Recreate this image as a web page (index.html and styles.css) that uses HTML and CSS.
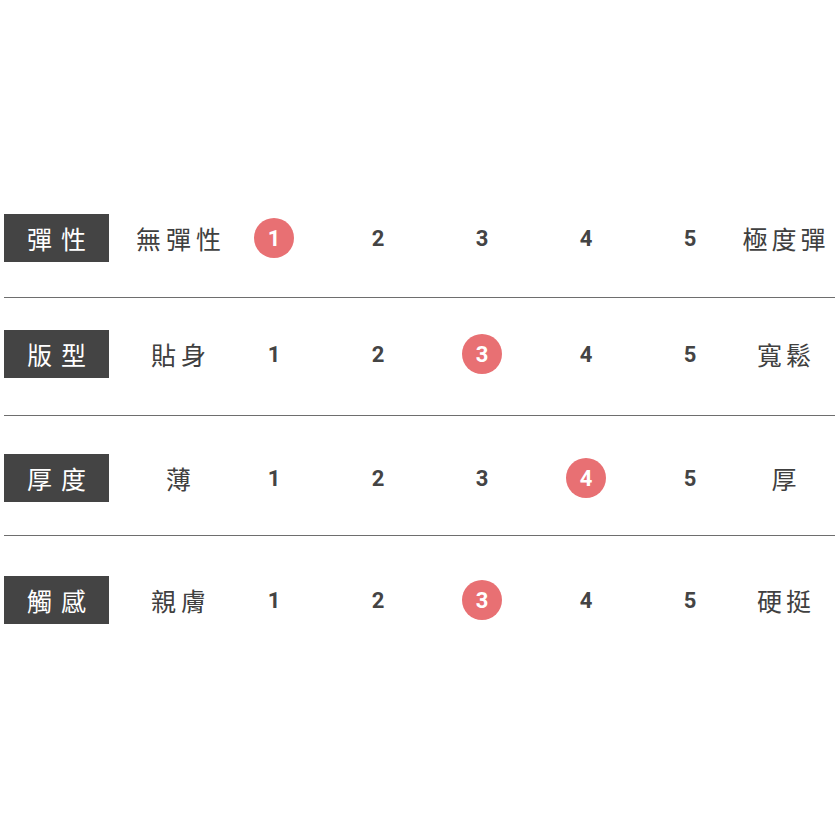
FILE: index.html
```html
<!DOCTYPE html>
<html lang="zh-Hant">
<head>
<meta charset="utf-8">
<link rel="stylesheet" href="styles.css">
</head>
<body>
<div class="chart">
  <div class="row">
    <div class="label">彈性</div>
    <div class="side side-left">無彈性</div>
    <div class="num"><span class="dot">1</span></div>
    <div class="num">2</div>
    <div class="num">3</div>
    <div class="num">4</div>
    <div class="num">5</div>
    <div class="side side-right">極度彈</div>
  </div>
  <div class="divider d1"></div>
  <div class="row r2">
    <div class="label">版型</div>
    <div class="side side-left">貼身</div>
    <div class="num">1</div>
    <div class="num">2</div>
    <div class="num"><span class="dot">3</span></div>
    <div class="num">4</div>
    <div class="num">5</div>
    <div class="side side-right">寬鬆</div>
  </div>
  <div class="divider d2"></div>
  <div class="row r3">
    <div class="label">厚度</div>
    <div class="side side-left">薄</div>
    <div class="num">1</div>
    <div class="num">2</div>
    <div class="num">3</div>
    <div class="num"><span class="dot">4</span></div>
    <div class="num">5</div>
    <div class="side side-right">厚</div>
  </div>
  <div class="divider d3"></div>
  <div class="row r4">
    <div class="label">觸感</div>
    <div class="side side-left">親膚</div>
    <div class="num">1</div>
    <div class="num">2</div>
    <div class="num"><span class="dot">3</span></div>
    <div class="num">4</div>
    <div class="num">5</div>
    <div class="side side-right">硬挺</div>
  </div>
</div>
</body>
</html>
```
FILE: styles.css
```css
html, body {
  margin: 0;
  padding: 0;
  background: #ffffff;
}
body {
  font-family: "Noto Sans CJK TC", "Noto Sans", sans-serif;
  color: #444444;
}
.chart {
  padding: 214px 0 0 4px;
  width: 831px;
  display: flex;
  flex-direction: column;
}
.row {
  display: grid;
  grid-template-columns: 105px 113px repeat(5, 104px) 94px;
  align-items: center;
  height: 48px;
}
.label {
  background: #444444;
  color: #ffffff;
  height: 48px;
  display: flex;
  align-items: center;
  justify-content: center;
  font-size: 25px;
  letter-spacing: 9px;
  padding-left: 9px;
  box-sizing: border-box;
  line-height: 1;
}
.side {
  font-size: 25px;
  line-height: 1;
  color: #404040;
  white-space: nowrap;
  display: flex;
  justify-content: center;
}
.side-left {
  letter-spacing: 5px;
  padding-left: 31px;
}
.side-right {
  letter-spacing: 4px;
  padding-right: 6px;
}
.num {
  font-family: "Roboto", "Open Sans", sans-serif;
  font-weight: 700;
  font-size: 22px;
  text-align: center;
  color: #444444;
  display: flex;
  justify-content: center;
  align-items: center;
}
.dot {
  width: 40px;
  height: 40px;
  border-radius: 50%;
  background: #e87073;
  color: #ffffff;
  display: flex;
  align-items: center;
  justify-content: center;
}
.divider {
  height: 1px;
  background: #6e6e6e;
}
.d1 { margin-top: 35px; }
.r2 { margin-top: 32px; }
.d2 { margin-top: 37px; }
.r3 { margin-top: 38px; }
.d3 { margin-top: 33px; }
.r4 { margin-top: 40px; }
```
